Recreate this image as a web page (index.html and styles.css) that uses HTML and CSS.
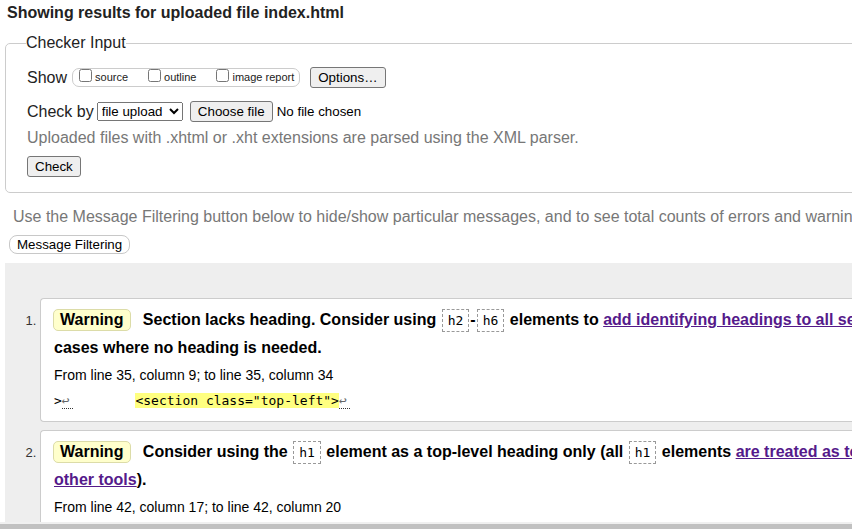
FILE: index.html
```html
<!DOCTYPE html>
<html lang="en">
<head>
<meta charset="utf-8">
<title>Showing results for uploaded file index.html</title>
<link rel="stylesheet" href="styles.css">
</head>
<body>
<div class="page">
  <h2 class="title">Showing results for uploaded file index.html</h2>
  <fieldset class="checker">
    <legend>Checker Input</legend>
    <div class="row show-row">
      <span class="row-label">Show</span>
      <span class="show-opts">
        <label class="opt"><input type="checkbox"><span>source</span></label>
        <label class="opt"><input type="checkbox"><span>outline</span></label>
        <label class="opt"><input type="checkbox"><span>image report</span></label>
      </span>
      <button class="btn options-btn" type="button">Options…</button>
    </div>
    <div class="row checkby-row">
      <span class="row-label">Check by</span>
      <select class="docselect"><option>file upload</option></select>
      <label class="btn file-btn">Choose file<input class="file" type="file" hidden></label>
      <span class="file-name">No file chosen</span>
    </div>
    <p class="hint">Uploaded files with .xhtml or .xht extensions are parsed using the XML parser.</p>
    <button class="btn check-btn" type="submit">Check</button>
  </fieldset>
  <p class="filter-note">Use the Message Filtering button below to hide/show particular messages, and to see total counts of errors and warnings.</p>
  <button class="filter-btn" type="button">Message Filtering</button>
  <div class="results">
    <ol class="messages">
      <li class="msg">
        <p class="msg-text"><strong class="badge">Warning</strong> <span>Section lacks heading. Consider using <code>h2</code>-<code>h6</code> elements to <a href="#">add identifying headings to all sections</a>, or else use a <code>div</code> element instead for any<br>cases where no heading is needed.</span></p>
        <p class="location">From line 35, column 9; to line 35, column 34</p>
        <p class="extract"><code>&gt;<span class="lf">↩</span>        <b>&lt;section class="top-left"&gt;</b><span class="lf">↩</span></code></p>
      </li>
      <li class="msg">
        <p class="msg-text"><strong class="badge">Warning</strong> <span>Consider using the <code>h1</code> element as a top-level heading only (all <code>h1</code> elements <a href="#">are treated as top-level headings by many screen readers and<br>other tools</a>).</span></p>
        <p class="location">From line 42, column 17; to line 42, column 20</p>
        <p class="extract"><code>&lt;h1&gt;</code></p>
      </li>
    </ol>
  </div>
</div>
<div class="hscroll"></div>
</body>
</html>
```

FILE: styles.css
```css
* { box-sizing: border-box; }
html { overflow: hidden; }
body {
  margin: 0;
  font-family: "Liberation Sans", Arial, sans-serif;
  color: #000;
  background: #fff;
}
.page { width: 1400px; }

.title {
  margin: 0;
  padding: 4px 7px 0;
  font-size: 16px;
  line-height: 18px;
  font-weight: bold;
  color: #222;
}

.checker {
  margin: 12px 0 0 5px;
  padding: 15px 20px 15px 21px;
  border: 1px solid #ccc;
  border-radius: 5px;
  min-width: 0;
}
.checker legend {
  padding: 0;
  margin-left: -1px;
  font-size: 16px;
  line-height: 18px;
  color: #222;
}

.row { display: flex; align-items: center; height: 21px; }
.checkby-row { margin-top: 13px; }
.row-label { font-size: 16px; line-height: 18px; color: #222; }

.show-opts {
  display: flex;
  align-items: flex-start;
  gap: 16px;
  height: 19px;
  margin-left: 5px;
  padding: 0 5px 0 2px;
  border: 1px solid #ccc;
  border-radius: 7px;
}
.opt { display: flex; align-items: flex-start; font-size: 11px; line-height: 13px; color: #222; }
.opt input { margin: 0 3px 0 4px; width: 13px; height: 13px; }
.opt span { padding-top: 2px; }

.btn {
  font-family: "Liberation Sans", Arial, sans-serif;
  font-size: 13.333px;
  line-height: 15px;
  padding: 2px 7px;
  color: #000;
  background: #efefef;
  border: 1px solid #767676;
  border-radius: 3px;
}
.options-btn { margin-left: 10px; }
.check-btn { display: block; }

.docselect {
  margin-left: 3px;
  width: 86px;
  height: 19px;
  font-family: "Liberation Sans", Arial, sans-serif;
  font-size: 13.333px;
  color: #000;
}
.file-btn { margin-left: 7px; width: 83px; padding: 2px 0; text-align: center; }
.file-name {
  margin-left: 4px;
  font-size: 13.333px;
  color: #000;
}

.hint {
  margin: 7px 0 9px;
  font-size: 16px;
  line-height: 18px;
  color: #777;
  white-space: nowrap;
}

.filter-note {
  margin: 15px 0 0;
  padding-left: 13px;
  font-size: 16px;
  line-height: 18px;
  color: #777;
  white-space: nowrap;
}
.filter-btn {
  display: block;
  margin: 9px 0 0 9px;
  padding: 1px 7px;
  font-family: "Liberation Sans", Arial, sans-serif;
  font-size: 13.333px;
  line-height: 15px;
  color: #000;
  background: #fff;
  border: 1px solid #c8c8c8;
  border-radius: 8px;
}

.results {
  margin: 9px 0 0 5px;
  padding: 35px 0 40px 35px;
  background: #eee;
}
.messages { margin: 0; padding: 0; list-style: decimal outside; }
.msg {
  background: #fff;
  border: 1px solid #ccc;
  border-right: none;
  border-radius: 4px 0 0 4px;
  padding: 7px 0 11px 13px;
  margin-bottom: 8px;
}
.msg::marker { font-size: 13px; color: #333; }

.msg-text {
  margin: 0;
  font-size: 16px;
  font-weight: bold;
  line-height: 28px;
  white-space: nowrap;
}
.badge {
  display: inline-block;
  line-height: 20px;
  padding: 0 7px 0 6px;
  margin-left: -1px;
  margin-right: 7px;
  background: #ffffcc;
  border: 1px solid #dcdca8;
  border-radius: 5px;
}
.msg-text code {
  display: inline-block;
  margin: 0 1px;
  padding: 1px 5px;
  font-family: "DejaVu Sans Mono", monospace;
  font-size: 13px;
  font-weight: normal;
  line-height: 19px;
  border: 1px dashed #999;
}
.msg-text a { color: #551a8b; text-decoration: underline; }

.location {
  margin: 4px 0 0;
  font-size: 14px;
  line-height: 18px;
}
.extract {
  margin: 8px 0 0;
  font-family: "DejaVu Sans Mono", monospace;
  font-size: 13px;
  line-height: 18px;
  white-space: pre;
}
.extract code { font-family: inherit; }
.extract b { font-weight: normal; background: #ffff80; }
.lf {
  display: inline-block;
  width: 11px;
  color: #666;
  border-bottom: 1px dotted #333;
  line-height: 15px;
}

.hscroll {
  position: fixed;
  left: 0;
  right: 0;
  bottom: 0;
  height: 7px;
  background: #c1c1c1;
  border-top: 2px solid #f0f0f0;
}
```
